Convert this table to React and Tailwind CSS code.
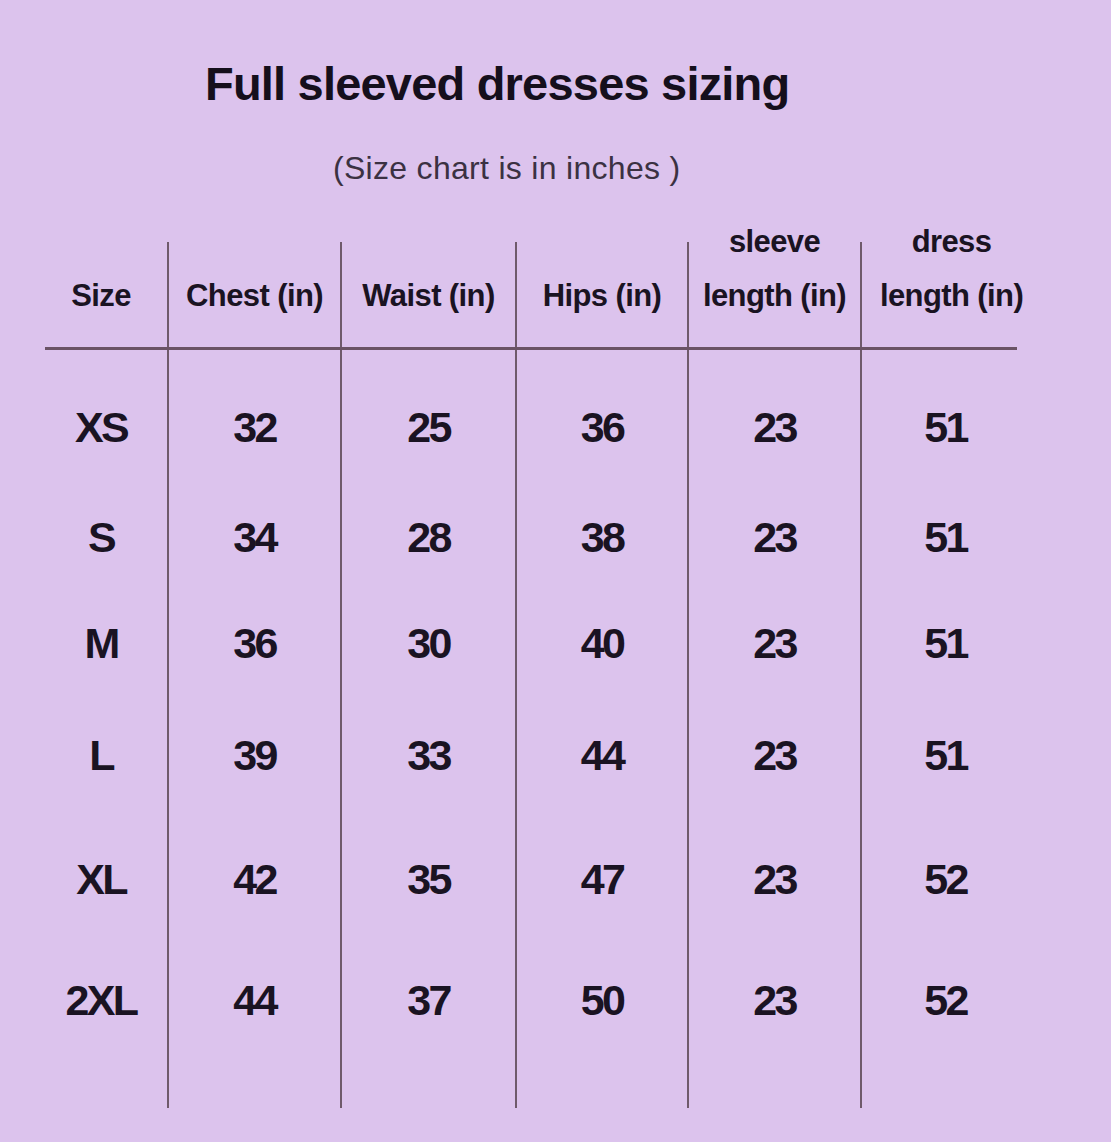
const columns = [
  { key: 'size', head: ['Size'], width: 'pr-[10px]' },
  { key: 'chest', head: ['Chest (in)'], width: '' },
  { key: 'waist', head: ['Waist (in)'], width: '' },
  { key: 'hips', head: ['Hips (in)'], width: '' },
  { key: 'sleeve', head: ['sleeve', 'length (in)'], width: '' },
  { key: 'dress', head: ['dress', 'length (in)'], width: 'pl-[24px]' },
];

const rows = [
  { size: 'XS', chest: 32, waist: 25, hips: 36, sleeve: 23, dress: 51 },
  { size: 'S', chest: 34, waist: 28, hips: 38, sleeve: 23, dress: 51 },
  { size: 'M', chest: 36, waist: 30, hips: 40, sleeve: 23, dress: 51 },
  { size: 'L', chest: 39, waist: 33, hips: 44, sleeve: 23, dress: 51 },
  { size: 'XL', chest: 42, waist: 35, hips: 47, sleeve: 23, dress: 52 },
  { size: '2XL', chest: 44, waist: 37, hips: 50, sleeve: 23, dress: 52 },
];

// row heights follow the spacing of the printed chart
const rowHeights = ['h-[114px]', 'h-[106px]', 'h-[106px]', 'h-[118px]', 'h-[130px]', 'h-[112px]'];

const bodyPad = ['pr-[10px]', '', '', '', '', 'pl-[12px]'];

const HeadCell = ({ col, first }) => (
  <div className={`flex flex-col items-center ${col.width} ${first ? '' : 'border-l-2 border-[#6f5a6b]'} ${col.head.length > 1 ? '' : 'pt-[34px]'}`}>
    {col.head.length > 1 ? (
      <>
        <div className="mt-[-20px] h-[40px] whitespace-nowrap leading-[40px]">{col.head[0]}</div>
        <div className="mt-[14px] h-[40px] whitespace-nowrap leading-[40px]">{col.head[1]}</div>
      </>
    ) : (
      <div className="h-[40px] whitespace-nowrap leading-[40px]">{col.head[0]}</div>
    )}
  </div>
);

export default function App() {
  return (
    <div className="min-h-[1142px] w-[1111px] overflow-hidden bg-[#dcc3ed] font-['Liberation_Sans',Arial,sans-serif] text-[#1a1322]">
      <h1 className="ml-[205px] mt-[60px] text-[47px] font-bold leading-none tracking-[-0.8px] text-[#150f1c]">
        Full sleeved dresses sizing
      </h1>
      <p className="ml-[333px] mt-[45px] text-[32px] leading-none tracking-[0.3px] text-[#3b3142]">
        (Size chart is in inches )
      </p>

      <div className="ml-[45px] mt-[58px] w-[972px]">
        {/* header */}
        <div className="grid h-[108px] grid-cols-[122px_173px_175px_172px_173px_157px] border-b-[3px] border-[#6a5365] text-[31px] font-bold tracking-[-0.6px]">
          {columns.map((col, i) => (
            <HeadCell key={col.key} col={col} first={i === 0} />
          ))}
        </div>

        {/* body */}
        <div className="grid h-[758px] grid-cols-[122px_173px_175px_172px_173px_157px] text-[43px] font-bold tracking-[-2.6px]">
          {columns.map((col, i) => (
            <div
              key={col.key}
              className={`flex flex-col pt-[20px] ${bodyPad[i]} ${i === 0 ? '' : 'border-l-2 border-[#6f5a6b]'}`}
            >
              {rows.map((row, r) => (
                <div key={r} className={`flex items-center justify-center ${rowHeights[r]}`}>
                  {row[col.key]}
                </div>
              ))}
            </div>
          ))}
        </div>
      </div>
    </div>
  );
}
